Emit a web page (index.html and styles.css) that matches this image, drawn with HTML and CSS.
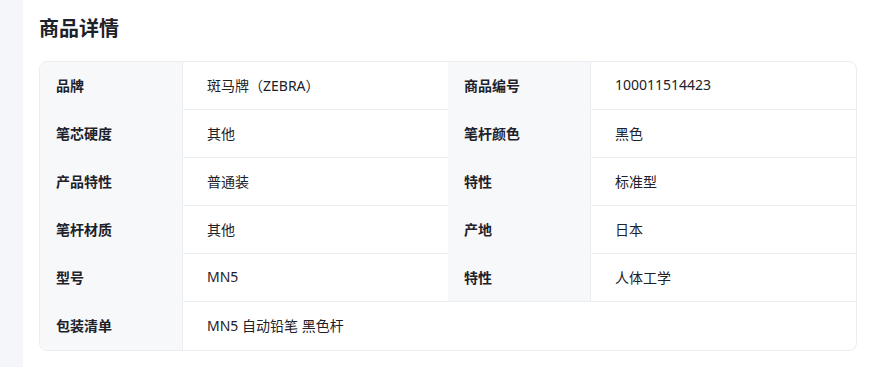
FILE: index.html
```html
<!DOCTYPE html>
<html lang="zh-CN">
<head>
<meta charset="utf-8">
<link rel="stylesheet" href="styles.css">
</head>
<body>
<div class="page">
  <aside class="rail"></aside>
  <main class="main">
    <h2 class="title">商品详情</h2>
    <div class="spec">
      <div class="k">品牌</div><div class="v">斑马牌（ZEBRA）</div>
      <div class="k">商品编号</div><div class="v">100011514423</div>
      <div class="k">笔芯硬度</div><div class="v">其他</div>
      <div class="k">笔杆颜色</div><div class="v">黑色</div>
      <div class="k">产品特性</div><div class="v">普通装</div>
      <div class="k">特性</div><div class="v">标准型</div>
      <div class="k">笔杆材质</div><div class="v">其他</div>
      <div class="k">产地</div><div class="v">日本</div>
      <div class="k">型号</div><div class="v">MN5</div>
      <div class="k edge">特性</div><div class="v">人体工学</div>
      <div class="k">包装清单</div><div class="v wide last">MN5 自动铅笔 黑色杆</div>
    </div>
  </main>
</div>
</body>
</html>
```

FILE: styles.css
```css
* { box-sizing: border-box; }
html, body {
  margin: 0;
  background: #ffffff;
  font-family: "Noto Sans", "Noto Sans CJK SC", sans-serif;
  color: #1d2129;
}
.page {
  display: flex;
  min-height: 367px;
}
.rail {
  width: 23px;
  flex: none;
  background: #f5f6fa;
}
.main {
  flex: 1;
  padding: 15px 13px 0 16px;
}
.title {
  margin: 0 0 18px 0;
  font-size: 20px;
  line-height: 28px;
  font-weight: 700;
  color: #1d2129;
}
.spec {
  display: grid;
  grid-template-columns: 143px 265px 143px 1fr;
  border: 1px solid #ebedf0;
  border-radius: 8px;
  overflow: hidden;
}
.k, .v {
  height: 48px;
  display: flex;
  align-items: center;
  font-size: 14px;
  padding-bottom: 2px;
}
.k {
  background: #f7f8fa;
  border-right: 1px solid #ebedf0;
  padding-left: 16px;
  font-weight: 700;
  color: #1d2129;
}
.k.edge {
  border-bottom: 1px solid #ebedf0;
}
.v {
  padding-left: 24px;
  border-bottom: 1px solid #ebedf0;
  color: #1d2129;
}
.v.wide {
  grid-column: 2 / 5;
}
.v.last {
  border-bottom: none;
}
```
